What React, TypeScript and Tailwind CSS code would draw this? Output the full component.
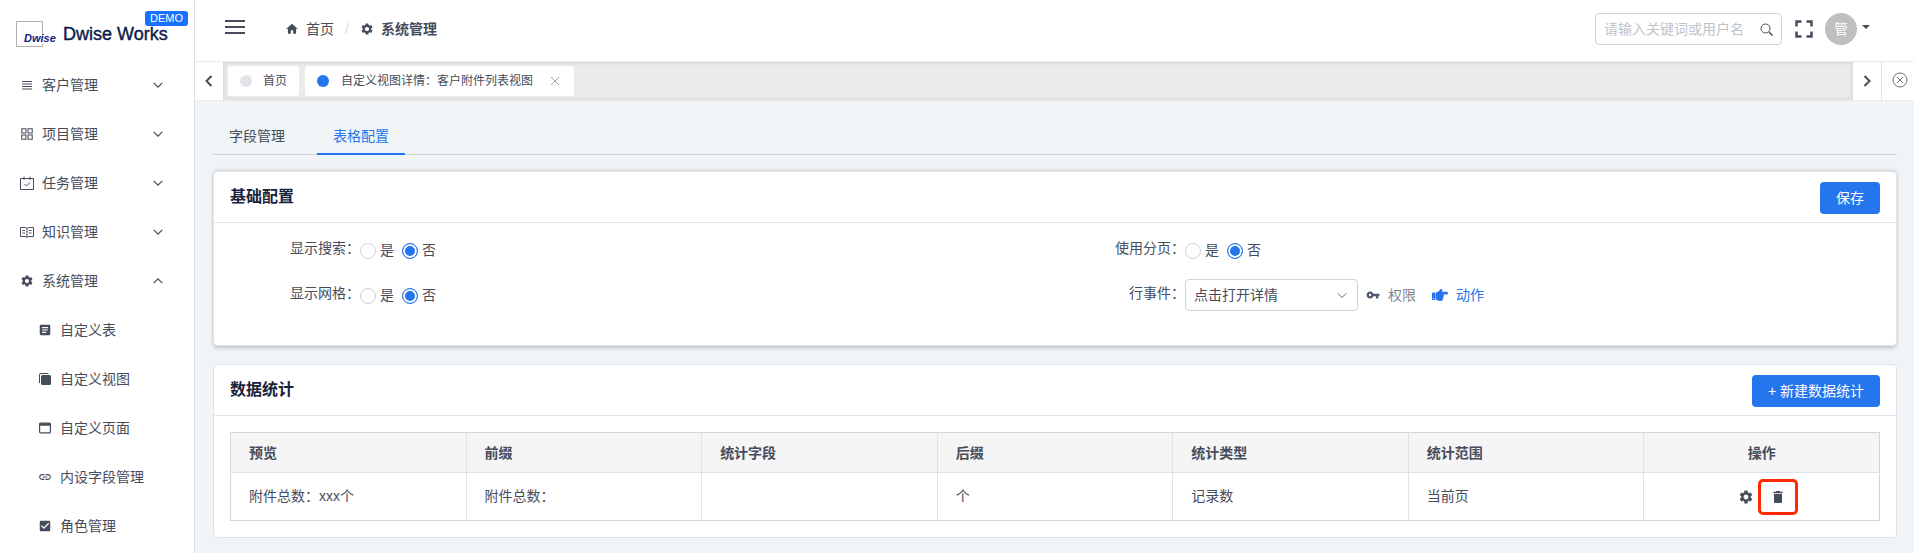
import { useState, type ReactNode } from "react";
import { AiOutlineAppstore } from "react-icons/ai";
import { FaHandPointRight } from "react-icons/fa";
import { MdArticle, MdCheckBox, MdDelete, MdFullscreen, MdHome, MdLink, MdSettings, MdVpnKey } from "react-icons/md";

function Chevron({ className, d = "M2 5l5 5 5-5", width = 1.5 }: { className: string; d?: string; width?: number }) {
  return (
    <svg viewBox="0 0 14 14" fill="none" stroke="currentColor" strokeWidth={width} className={className}>
      <path d={d} />
    </svg>
  );
}

function LinesIcon() {
  return (
    <svg viewBox="0 0 14 14" stroke="currentColor" className="size-[14px]">
      <path d="M2 3.500h10M2 6h10M2 8.500h10M2 11h10" />
    </svg>
  );
}

function CalendarIcon() {
  return (
    <svg viewBox="0 0 14 14" fill="none" stroke="currentColor" className="size-[14px]">
      <path d="M.5 2.500h13v11H.5zM4 .5v3.500M10 .5v3.500" />
      <path d="M4.500 8l2 2L10 6.500" />
    </svg>
  );
}

function BookIcon() {
  return (
    <svg viewBox="0 0 14 14" fill="none" stroke="currentColor" className="size-[14px]">
      <path d="M7 3.500c-.5-.6-1.200-1-2.200-1H.5v9H5c1 0 1.600.3 2 1 .4-.7 1-1 2-1h4.500v-9H9.200c-1 0-1.700.4-2.200 1zM7 3.500v9" />
      <path d="M2.500 5.500H5M2.500 8H5M9 5.500h2.500M9 8h2.500" />
    </svg>
  );
}

function LayersIcon() {
  return (
    <svg viewBox="0 0 12 12" fill="currentColor" className="size-3">
      <rect x="2" y="2" width="10" height="10" rx="1.500" />
      <path d="M0 10V2a2 2 0 0 1 2-2h7.500v1H2a1 1 0 0 0-1 1v8z" />
    </svg>
  );
}

function WindowIcon() {
  return (
    <svg viewBox="0 0 12 12" fill="none" stroke="currentColor" className="size-3">
      <rect x=".6" y="1.100" width="10.800" height="9.800" rx="1" strokeWidth="1.200" />
      <path d="M.5 2.500h11" strokeWidth="2.500" />
    </svg>
  );
}

const menus = [
  { label: "客户管理", icon: <LinesIcon /> },
  { label: "项目管理", icon: <AiOutlineAppstore className="size-4" /> },
  { label: "任务管理", icon: <CalendarIcon /> },
  { label: "知识管理", icon: <BookIcon /> },
  { label: "系统管理", icon: <MdSettings className="size-[14px]" />, open: true }
];

const subMenus = [
  { label: "自定义表", icon: <MdArticle className="size-[14px]" /> },
  { label: "自定义视图", icon: <LayersIcon /> },
  { label: "自定义页面", icon: <WindowIcon /> },
  { label: "内设字段管理", icon: <MdLink className="size-[14px]" /> },
  { label: "角色管理", icon: <MdCheckBox className="size-[14px]" /> }
];

const columns = ["预览", "前缀", "统计字段", "后缀", "统计类型", "统计范围"];
const row = ["附件总数：xxx个", "附件总数：", "", "个", "记录数", "当前页"];

function Logo() {
  return (
    <div className="relative flex h-[60px] items-center pl-4">
      <svg viewBox="0 0 42 27" className="mt-2 h-[27px] w-[42px] overflow-visible">
        <path d="M26.500 14V.5H.5v25h26V23" fill="none" stroke="#b0b0b0" />
        <text x="8" y="21" fontFamily="Liberation Sans, sans-serif" fontSize="11" fontWeight="700" fontStyle="italic" fill="#0f2080">Dwise</text>
      </svg>
      <span className="mt-2 ml-[5px] text-lg font-normal text-[#0c1b4d] [-webkit-text-stroke:0.4px]">Dwise Works</span>
      <span className="absolute top-[11px] left-[145px] h-[15px] rounded-[3px] bg-[#1872ff] px-[5px] text-[11px] leading-[15px] text-white">DEMO</span>
    </div>
  );
}

function Sidebar() {
  return (
    <aside className="w-[195px] shrink-0 border-r border-[#dcdee2] bg-white">
      <Logo />
      <nav>
        {menus.map((menu) => (
          <button key={menu.label} className="flex h-[49px] w-full items-center pr-[30px] pl-[19px]">
            <span className="flex w-4 justify-center">{menu.icon}</span>
            <span className="ml-[7px]">{menu.label}</span>
            <Chevron className="ml-auto size-3" d={menu.open ? "M2 9.500l5-5 5 5" : "M2 4.500l5 5 5-5"} />
          </button>
        ))}
        {subMenus.map((menu) => (
          <a key={menu.label} href="#" className="flex h-[49px] items-center pl-[38px]">
            <span className="flex w-[14px] justify-center">{menu.icon}</span>
            <span className="ml-2">{menu.label}</span>
          </a>
        ))}
      </nav>
    </aside>
  );
}

function Header() {
  return (
    <header className="flex h-[62px] items-center border-b border-[#e8eaec] bg-white pr-11 pb-[3px] pl-[30px]">
      <button aria-label="menu" className="flex flex-col gap-1 pb-1">
        <span className="h-[2px] w-5 bg-current" />
        <span className="h-[2px] w-5 bg-current" />
        <span className="h-[2px] w-5 bg-current" />
      </button>
      <div className="ml-10 flex items-center">
        <MdHome className="size-[14px]" />
        <a href="#" className="ml-[7px]">首页</a>
        <span className="mx-[11px] text-[#dcdee2]">/</span>
        <MdSettings className="size-[14px]" />
        <span className="ml-[7px] font-bold">系统管理</span>
      </div>
      <div className="ml-auto flex h-8 w-[187px] items-center rounded border border-[#d0d2d9] px-2">
        <input aria-label="搜索" placeholder="请输入关键词或用户名" className="min-w-0 flex-1 outline-none placeholder:text-[#c0c3cc]" />
        <svg viewBox="0 0 13 13" fill="none" stroke="currentColor" className="size-[13px]">
          <circle cx="5.500" cy="5.500" r="4.500" />
          <path d="M9 9l3.500 3.500" strokeWidth="1.500" />
        </svg>
      </div>
      <button aria-label="fullscreen" className="ml-[7px]"><MdFullscreen className="size-[30px]" /></button>
      <span className="ml-[6px] flex size-8 items-center justify-center rounded-full bg-[#bfbfbf] text-white">管</span>
      <svg viewBox="0 0 8 4" fill="currentColor" className="mb-1 ml-[5px] h-1 w-2"><path d="M0 0h8L4 4z" /></svg>
    </header>
  );
}

function OpenTabs() {
  return (
    <div className="flex h-[39px] border-b border-[#e8eaec] bg-white">
      <button aria-label="prev" className="flex w-7 items-center justify-center">
        <Chevron className="size-[14px]" d="M9.500 2l-5 5 5 5" width={2} />
      </button>
      <div className="flex flex-1 gap-[6px] bg-[#ebebeb] px-[5px] py-1 text-xs shadow-[inset_0_0_3px_2px_rgba(100,100,100,0.1)]">
        <button className="flex h-[30px] items-center gap-[11px] rounded-[3px] bg-white px-3">
          <span className="size-3 rounded-full bg-[#e0e4e8]" />
          首页
        </button>
        <button className="flex h-[30px] items-center gap-3 rounded-[3px] bg-white pr-[15px] pl-3">
          <span className="size-3 rounded-full bg-[#2575ed]" />
          自定义视图详情：客户附件列表视图
          <svg viewBox="0 0 8 8" stroke="#a0a4ae" className="ml-[6px] size-2"><path d="M0 0l8 8M8 0L0 8" /></svg>
        </button>
      </div>
      <button aria-label="next" className="flex w-[29px] items-center justify-center border-r border-[#e0e2e6]">
        <Chevron className="size-[14px]" d="M4.500 2l5 5-5 5" width={2} />
      </button>
      <button aria-label="close all" className="flex w-8 items-center justify-center pb-[2px] pl-1">
        <svg viewBox="0 0 16 16" fill="none" stroke="currentColor" strokeWidth=".8" className="size-4">
          <circle cx="8" cy="8" r="7" />
          <path d="M5 5l6 6M11 5l-6 6" />
        </svg>
      </button>
    </div>
  );
}

function Field({ label, children }: { label: string; children: ReactNode }) {
  return (
    <div className="flex h-8">
      <span className="h-7 w-[130px] text-right leading-7">{label}：</span>
      {children}
    </div>
  );
}

function YesNo({ name }: { name: string }) {
  const [value, setValue] = useState("否");

  return (
    <div className="flex items-center gap-2">
      {["是", "否"].map((option) => (
        <label key={option} className="flex items-center gap-1">
          <input
            type="radio"
            name={name}
            checked={value === option}
            onChange={() => setValue(option)}
            className="mt-[2px] size-4 appearance-none rounded-full border border-[#d0d2d9] checked:border-[#2575ed] checked:bg-[#2575ed] checked:shadow-[inset_0_0_0_2px_white]"
          />
          {option}
        </label>
      ))}
    </div>
  );
}

function CardHeader({ title, action }: { title: string; action: string }) {
  return (
    <div className="flex h-[51px] items-center justify-between border-b border-[#e3e5e8] px-4 pt-[2px]">
      <h2 className="pb-[2px] text-base font-bold text-[#17233d]">{title}</h2>
      <button className="h-8 rounded bg-[#2575ed] px-4 text-white">{action}</button>
    </div>
  );
}

function BasicConfig() {
  return (
    <section className="mt-4 rounded border border-[#e3e5e8] bg-white shadow-[0_-1px_3px_rgba(0,0,0,0.14),0_3px_4px_-1px_rgba(0,0,0,0.2)]">
      <CardHeader title="基础配置" action="保存" />
      <div className="grid grid-cols-2 gap-y-[13px] px-4 pt-[11px] pb-[34px]">
        <Field label="显示搜索"><YesNo name="search" /></Field>
        <Field label="使用分页"><YesNo name="paging" /></Field>
        <Field label="显示网格"><YesNo name="grid" /></Field>
        <Field label="行事件">
          <div className="relative">
            <select aria-label="行事件" className="h-8 w-[173px] appearance-none rounded border border-[#d0d2d9] bg-white px-2">
              <option>点击打开详情</option>
            </select>
            <Chevron className="pointer-events-none absolute top-[10px] right-[10px] size-3" width={1} />
          </div>
          <button className="ml-2 flex items-center gap-2 text-[#808695]">
            <MdVpnKey className="size-[14px] text-[#515a6e]" />
            权限
          </button>
          <button className="ml-4 flex items-center gap-2 text-[#2575ed]">
            <FaHandPointRight className="size-4" />
            动作
          </button>
        </Field>
      </div>
    </section>
  );
}

function Statistics() {
  return (
    <section className="mt-[18px] rounded border border-[#dfe3e8] bg-white">
      <CardHeader title="数据统计" action="+ 新建数据统计" />
      <div className="p-4">
        <table className="w-full table-fixed border-collapse border border-[#d0d4dc] text-left">
          <thead>
            <tr className="h-10 bg-[#f5f5f5]">
              {columns.map((column) => <th key={column} className="border-b border-l border-[#dfe3e8] px-[18px] font-bold first:border-l-0">{column}</th>)}
              <th className="border-b border-l border-[#dfe3e8] text-center font-bold">操作</th>
            </tr>
          </thead>
          <tbody>
            <tr className="h-12">
              {row.map((cell, i) => <td key={columns[i]} className="border-l border-[#dfe3e8] px-[18px] pb-[2px] first:border-l-0">{cell}</td>)}
              <td className="border-l border-[#dfe3e8]">
                <div className="flex items-center justify-center gap-4">
                  <button aria-label="设置"><MdSettings className="size-4" /></button>
                  <button aria-label="删除" className="relative">
                    <MdDelete className="size-4" />
                    <span className="absolute -inset-x-3 -inset-y-[10px] rounded-[5px] border-3 border-[#ff2a00]" />
                  </button>
                </div>
              </td>
            </tr>
          </tbody>
        </table>
      </div>
    </section>
  );
}

export default function App() {
  return (
    <div className="flex min-h-screen bg-[#f0f4f7] font-['Liberation_Sans','Noto_Sans_CJK_SC',sans-serif] text-sm text-[#464c5b]">
      <Sidebar />
      <div className="min-w-0 flex-1">
        <Header />
        <OpenTabs />
        <main className="pr-[17px] pb-4 pl-[18px]">
          <div className="flex h-[54px] items-end gap-4 border-b border-[#d0d4d9]">
            <button className="h-9 px-4">字段管理</button>
            <button className="-mb-px h-9 border-b-2 border-[#2575ed] px-4 text-[#2575ed]">表格配置</button>
          </div>
          <BasicConfig />
          <Statistics />
        </main>
      </div>
    </div>
  );
}
